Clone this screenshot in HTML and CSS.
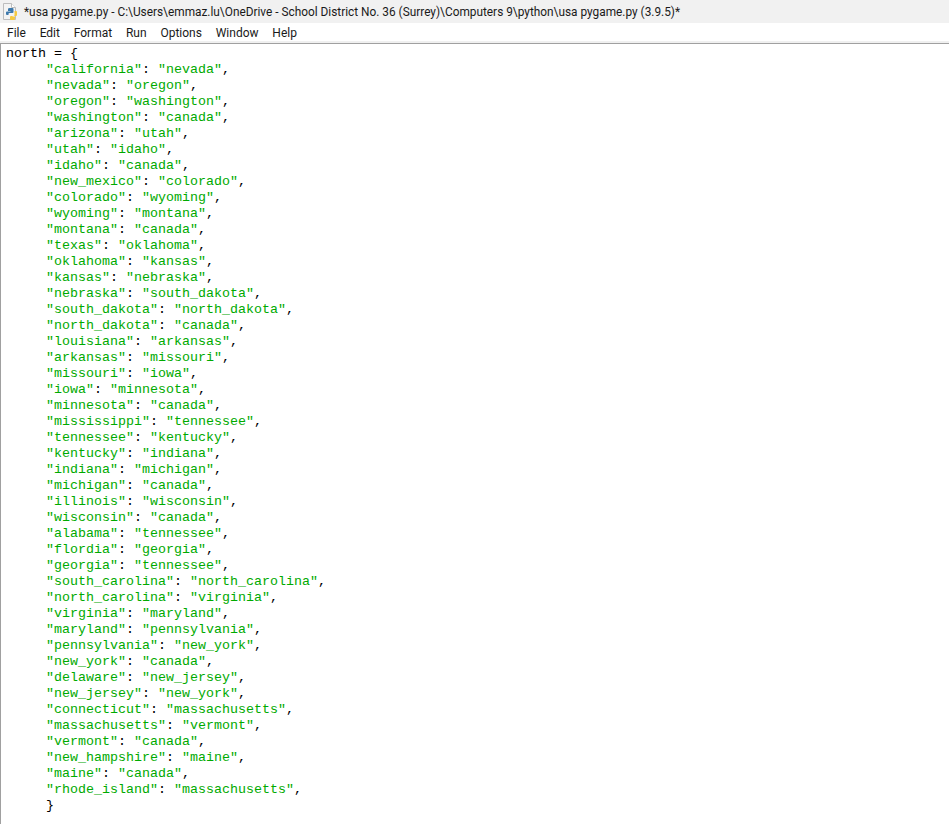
FILE: index.html
```html
<!DOCTYPE html>
<html lang="en">
<head>
<meta charset="utf-8">
<title>usa pygame.py</title>
<link rel="stylesheet" href="styles.css">
</head>
<body>
<div class="window">
<header class="titlebar">
<svg class="app-icon" width="15" height="18" viewBox="0 0 15 18"><path d="M.5.5h8l4 4v12H.5z" fill="#f3f3f3" stroke="#bdbdbd"/><path d="M8.500.5v4h4" fill="#fff" stroke="#bdbdbd"/><path d="M6.500 5h3q1 0 1 1v3q0 1-1 1h-3q-1 0-1 1v1H4q-1 0-1-1V9.500q0-1 1-1h3.500V8H5V6q0-1 1.500-1z" fill="#3c78ab"/><path d="M11.500 8H13q1 0 1 1v3q0 1-1 1H9.500v.500H12V15q0 2-1 2H8q-1 0-1-1v-2q0-1 1-1h2.500q1 0 1-1z" fill="#f5c93f"/></svg>
<span class="title">*usa pygame.py - C:\Users\emmaz.lu\OneDrive - School District No. 36 (Surrey)\Computers 9\python\usa pygame.py (3.9.5)*</span>
</header>
<nav class="menubar"><span>File</span><span>Edit</span><span>Format</span><span>Run</span><span>Options</span><span>Window</span><span>Help</span></nav>
<main class="editor">
<div class="code">
<div>north = {</div>
<div class="in"><span class="s">"california"</span>: <span class="s">"nevada"</span>,</div>
<div class="in"><span class="s">"nevada"</span>: <span class="s">"oregon"</span>,</div>
<div class="in"><span class="s">"oregon"</span>: <span class="s">"washington"</span>,</div>
<div class="in"><span class="s">"washington"</span>: <span class="s">"canada"</span>,</div>
<div class="in"><span class="s">"arizona"</span>: <span class="s">"utah"</span>,</div>
<div class="in"><span class="s">"utah"</span>: <span class="s">"idaho"</span>,</div>
<div class="in"><span class="s">"idaho"</span>: <span class="s">"canada"</span>,</div>
<div class="in"><span class="s">"new_mexico"</span>: <span class="s">"colorado"</span>,</div>
<div class="in"><span class="s">"colorado"</span>: <span class="s">"wyoming"</span>,</div>
<div class="in"><span class="s">"wyoming"</span>: <span class="s">"montana"</span>,</div>
<div class="in"><span class="s">"montana"</span>: <span class="s">"canada"</span>,</div>
<div class="in"><span class="s">"texas"</span>: <span class="s">"oklahoma"</span>,</div>
<div class="in"><span class="s">"oklahoma"</span>: <span class="s">"kansas"</span>,</div>
<div class="in"><span class="s">"kansas"</span>: <span class="s">"nebraska"</span>,</div>
<div class="in"><span class="s">"nebraska"</span>: <span class="s">"south_dakota"</span>,</div>
<div class="in"><span class="s">"south_dakota"</span>: <span class="s">"north_dakota"</span>,</div>
<div class="in"><span class="s">"north_dakota"</span>: <span class="s">"canada"</span>,</div>
<div class="in"><span class="s">"louisiana"</span>: <span class="s">"arkansas"</span>,</div>
<div class="in"><span class="s">"arkansas"</span>: <span class="s">"missouri"</span>,</div>
<div class="in"><span class="s">"missouri"</span>: <span class="s">"iowa"</span>,</div>
<div class="in"><span class="s">"iowa"</span>: <span class="s">"minnesota"</span>,</div>
<div class="in"><span class="s">"minnesota"</span>: <span class="s">"canada"</span>,</div>
<div class="in"><span class="s">"mississippi"</span>: <span class="s">"tennessee"</span>,</div>
<div class="in"><span class="s">"tennessee"</span>: <span class="s">"kentucky"</span>,</div>
<div class="in"><span class="s">"kentucky"</span>: <span class="s">"indiana"</span>,</div>
<div class="in"><span class="s">"indiana"</span>: <span class="s">"michigan"</span>,</div>
<div class="in"><span class="s">"michigan"</span>: <span class="s">"canada"</span>,</div>
<div class="in"><span class="s">"illinois"</span>: <span class="s">"wisconsin"</span>,</div>
<div class="in"><span class="s">"wisconsin"</span>: <span class="s">"canada"</span>,</div>
<div class="in"><span class="s">"alabama"</span>: <span class="s">"tennessee"</span>,</div>
<div class="in"><span class="s">"flordia"</span>: <span class="s">"georgia"</span>,</div>
<div class="in"><span class="s">"georgia"</span>: <span class="s">"tennessee"</span>,</div>
<div class="in"><span class="s">"south_carolina"</span>: <span class="s">"north_carolina"</span>,</div>
<div class="in"><span class="s">"north_carolina"</span>: <span class="s">"virginia"</span>,</div>
<div class="in"><span class="s">"virginia"</span>: <span class="s">"maryland"</span>,</div>
<div class="in"><span class="s">"maryland"</span>: <span class="s">"pennsylvania"</span>,</div>
<div class="in"><span class="s">"pennsylvania"</span>: <span class="s">"new_york"</span>,</div>
<div class="in"><span class="s">"new_york"</span>: <span class="s">"canada"</span>,</div>
<div class="in"><span class="s">"delaware"</span>: <span class="s">"new_jersey"</span>,</div>
<div class="in"><span class="s">"new_jersey"</span>: <span class="s">"new_york"</span>,</div>
<div class="in"><span class="s">"connecticut"</span>: <span class="s">"massachusetts"</span>,</div>
<div class="in"><span class="s">"massachusetts"</span>: <span class="s">"vermont"</span>,</div>
<div class="in"><span class="s">"vermont"</span>: <span class="s">"canada"</span>,</div>
<div class="in"><span class="s">"new_hampshire"</span>: <span class="s">"maine"</span>,</div>
<div class="in"><span class="s">"maine"</span>: <span class="s">"canada"</span>,</div>
<div class="in"><span class="s">"rhode_island"</span>: <span class="s">"massachusetts"</span>,</div>
<div class="in">}</div>
</div>
</main>
</div>
</body>
</html>
```
FILE: styles.css
```css
html, body { margin: 0; padding: 0; background: #fff; }
body { width: 949px; height: 824px; overflow: hidden; }
.window { display: flex; flex-direction: column; height: 824px; font-family: Roboto, "Liberation Sans", sans-serif; color: #1a1a1a; }
.titlebar { flex: 0 0 23px; display: flex; align-items: flex-start; gap: 6px; padding: 3px 0 0 3px; box-sizing: border-box; background: #f1f1f1; font-size: 11.85px; line-height: 18px; overflow: hidden; }
.app-icon { flex: none; overflow: visible; }
.title { white-space: nowrap; }
.menubar { flex: 0 0 20px; display: flex; gap: 13.8px; padding: 1px 0 0 7px; box-sizing: border-box; align-items: center; background: #fff; border-bottom: 2px solid #f0f0f0; font-size: 12px; }
.editor { flex: 1; border-top: 1px solid #a0a0a0; border-left: 1px solid #a0a0a0; padding: 2px 0 0 5px; }
.code { font: 13.333px/16px "Liberation Mono", monospace; color: #000; white-space: nowrap; }
.in { padding-left: 40px; }
.s { color: #00aa00; }
```
